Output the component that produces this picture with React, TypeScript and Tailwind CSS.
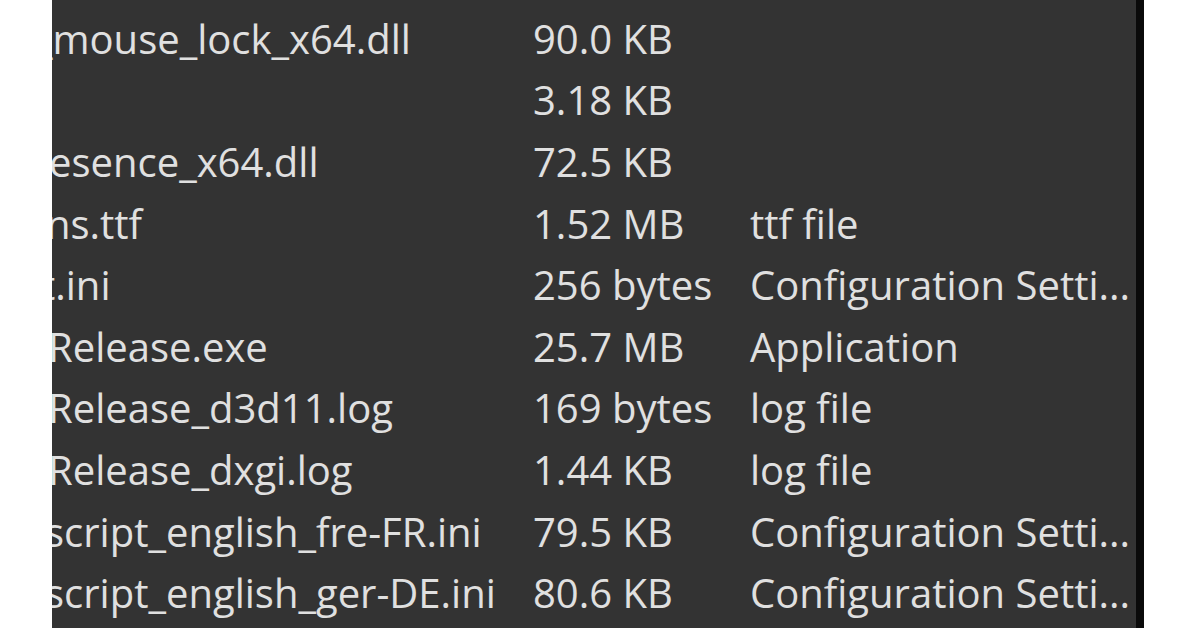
import React from "react";

type Row = { name: string; nameClass: string; size: string; type: string };

const rows: Row[] = [
  { name: "_mouse_lock_x64.dll", nameClass: "ml-[-17px]", size: "90.0 KB", type: "" },
  { name: "", nameClass: "", size: "3.18 KB", type: "" },
  { name: "esence_x64.dll", nameClass: "ml-[-3px]", size: "72.5 KB", type: "" },
  { name: "ns.ttf", nameClass: "ml-[-6px]", size: "1.52 MB", type: "ttf file" },
  { name: "t.ini", nameClass: "ml-[-11px]", size: "256 bytes", type: "Configuration Setti..." },
  { name: "Release.exe", nameClass: "ml-[-4px]", size: "25.7 MB", type: "Application" },
  { name: "Release_d3d11.log", nameClass: "ml-[-4px]", size: "169 bytes", type: "log file" },
  { name: "Release_dxgi.log", nameClass: "ml-[-4px]", size: "1.44 KB", type: "log file" },
  { name: "script_english_fre-FR.ini", nameClass: "ml-[-7px]", size: "79.5 KB", type: "Configuration Setti..." },
  { name: "script_english_ger-DE.ini", nameClass: "ml-[-7px]", size: "80.6 KB", type: "Configuration Setti..." },
];

export default function App() {
  return (
    <div
      className="w-[1196px] h-[628px] flex bg-white overflow-hidden"
      style={{ fontFamily: '"Open Sans", "Noto Sans", sans-serif' }}
    >
      <div className="w-[52px] shrink-0 bg-white" />
      <div className="w-[1084px] shrink-0 bg-[#333333] pt-[8px] text-[#e0e0e0] text-[40px] overflow-hidden">
        {rows.map((r, i) => (
          <div key={i} className="flex items-center h-[61.6px] leading-[1.35] whitespace-nowrap">
            <div className="w-[481px] shrink-0 overflow-hidden">
              <span className={`block ${r.nameClass}`}>{r.name || "\u00a0"}</span>
            </div>
            <div className="w-[217px] shrink-0">{r.size}</div>
            <div className="flex-1 min-w-0">{r.type}</div>
          </div>
        ))}
      </div>
      <div className="w-[8px] shrink-0 bg-[#0a0a0a]" />
      <div className="flex-1 bg-white" />
    </div>
  );
}
